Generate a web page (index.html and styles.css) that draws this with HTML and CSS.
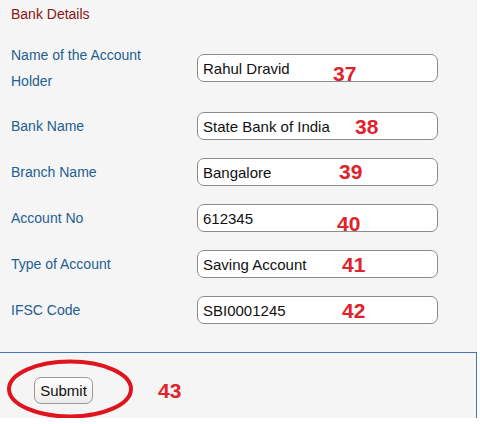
FILE: index.html
```html
<!DOCTYPE html>
<html>
<head>
<meta charset="utf-8">
<link rel="stylesheet" href="styles.css">
</head>
<body>
<div class="page">
  <div class="details">
    <h2 class="title">Bank Details</h2>
    <div class="form">
      <div class="row">
        <label class="label label-wrap">Name of the Account Holder</label>
        <input class="field" type="text" value="Rahul Dravid">
      </div>
      <div class="row">
        <label class="label">Bank Name</label>
        <input class="field" type="text" value="State Bank of India">
      </div>
      <div class="row">
        <label class="label">Branch Name</label>
        <input class="field" type="text" value="Bangalore">
      </div>
      <div class="row">
        <label class="label">Account No</label>
        <input class="field" type="text" value="612345">
      </div>
      <div class="row">
        <label class="label">Type of Account</label>
        <input class="field" type="text" value="Saving Account">
      </div>
      <div class="row">
        <label class="label">IFSC Code</label>
        <input class="field" type="text" value="SBI0001245">
      </div>
    </div>
  </div>
  <div class="actions">
    <button class="submit" type="button">Submit</button>
  </div>

  <span class="mark m37">37</span>
  <span class="mark m38">38</span>
  <span class="mark m39">39</span>
  <span class="mark m40">40</span>
  <span class="mark m41">41</span>
  <span class="mark m42">42</span>
  <span class="mark m43">43</span>
  <svg class="circle" width="140" height="66" viewBox="0 0 140 66">
    <ellipse cx="70" cy="33" rx="61" ry="27.5" fill="none" stroke="#e0141e" stroke-width="4"/>
  </svg>
</div>
</body>
</html>
```

FILE: styles.css
```css
html, body {
  margin: 0;
  padding: 0;
  background: #ffffff;
}

body {
  font-family: "Liberation Sans", Arial, sans-serif;
}

.page {
  position: relative;
  width: 478px;
}

.details {
  width: 477px;
  background: #f5f5f5;
  padding: 4px 0 19px;
}

.title {
  margin: 0;
  padding: 0 11px;
  font-size: 14px;
  font-weight: normal;
  line-height: 20px;
  color: #871414;
}

.form {
  margin-top: 9px;
  display: flex;
  flex-direction: column;
}

.row {
  display: grid;
  grid-template-columns: 186px 241px;
  align-items: center;
  padding: 9px 0 9px 11px;
}

.label {
  font-size: 14px;
  line-height: 26px;
  color: #23608f;
}

.label-wrap {
  max-width: 150px;
}

.field {
  box-sizing: border-box;
  width: 241px;
  height: 28px;
  margin: 0;
  padding: 0 5px;
  border: 1px solid #8c8c8c;
  border-radius: 7px;
  background: #ffffff;
  font-family: "Liberation Sans", Arial, sans-serif;
  font-size: 15px;
  color: #111111;
  outline: none;
}

.actions {
  height: 65px;
  background: #f5f5f5;
  border-top: 1px solid #4476ad;
  border-right: 1px solid #4476ad;
  width: 477px;
  padding-top: 24px;
  box-sizing: border-box;
  height: 66px;
}

.submit {
  box-sizing: border-box;
  margin-left: 34px;
  height: 27px;
  width: 59px;
  padding: 0;
  border: 1px solid #9a9a9a;
  border-radius: 7px;
  background: linear-gradient(#ffffff, #ececec);
  font-family: "Liberation Sans", Arial, sans-serif;
  font-size: 15px;
  color: #111111;
}

.mark {
  position: absolute;
  font-family: "Liberation Sans", Arial, sans-serif;
  font-weight: bold;
  font-size: 21px;
  line-height: 21px;
  color: #e0232b;
}

.m37 { left: 333px; top: 63px; }
.m38 { left: 355px; top: 116px; }
.m39 { left: 339px; top: 161px; }
.m40 { left: 337px; top: 213px; }
.m41 { left: 342px; top: 254px; }
.m42 { left: 342px; top: 300px; }
.m43 { left: 158px; top: 380px; }

.circle {
  position: absolute;
  left: 0;
  top: 356px;
}
```
